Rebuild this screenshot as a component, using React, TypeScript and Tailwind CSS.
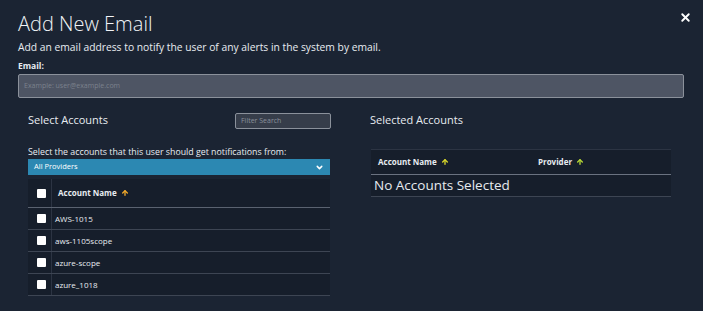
import { X, ChevronDown, ArrowUp } from "lucide-react";

const accounts = ["AWS-1015", "aws-1105scope", "azure-scope", "azure_1018"];

function Box() {
  return <div className="w-[9px] h-[9px] bg-white rounded-[1px]" />;
}

export default function App() {
  return (
    <div
      className="w-[703px] h-[311px] bg-[#1b2433] text-[#e8ecf1] overflow-hidden relative"
      style={{ fontFamily: '"Open Sans", "Noto Sans", sans-serif' }}
    >
      <button className="absolute right-[11px] top-[11px] text-white">
        <X size={13} strokeWidth={3.5} />
      </button>
      <div className="px-[18px] pt-[10px]">
        <h1 className="text-[20px] leading-[28px] font-light text-[#f1f4f7]">Add New Email</h1>
        <p className="text-[10.3px] leading-[14px] mt-[2px]">
          Add an email address to notify the user of any alerts in the system by email.
        </p>
        <label className="block text-[8.5px] font-bold mt-[6px] leading-[12px]">Email:</label>
        <div className="mt-[2px] w-[666px] h-[24px] bg-[#4e5564] border border-[#8b919b] rounded-[2px] flex items-center px-[5px]">
          <span className="text-[7px] text-[#7c828d]">Example: user@example.com</span>
        </div>
      </div>

      <div className="flex mt-[15px]">
        <div className="w-[302px] ml-[28px]">
          <div className="flex items-start justify-between h-[16px]">
            <span className="text-[11px] leading-[13px]">Select Accounts</span>
            <div className="w-[96px] h-[16px] border border-[#8b919b] bg-[#363d4a] rounded-[2px] flex items-center px-[5px] mr-[-1px]">
              <span className="text-[7px] text-[#8a909a]">Filter Search</span>
            </div>
          </div>
          <p className="text-[8.8px] mt-[17px] leading-[12px]">
            Select the accounts that this user should get notifications from:
          </p>
          <div className="h-[16px] bg-[#2c88b2] flex items-center justify-between px-[6px] mt-[1px]">
            <span className="text-[7.5px] text-white">All Providers</span>
            <ChevronDown size={9} strokeWidth={4} className="text-white" />
          </div>
          <div className="mt-[4px] bg-[#161e2b]">
            <div className="flex items-center h-[29px] border-b border-[#5a6270]">
              <div className="w-[23px] flex justify-center pl-[3px]">
                <Box />
              </div>
              <div className="w-px h-full bg-[#2c3443]" />
              <span className="ml-[6px] text-[8px] font-bold">Account Name</span>
              <ArrowUp size={8} strokeWidth={4} className="text-[#f0a82a] ml-[4px]" />
            </div>
            {accounts.map((a) => (
              <div key={a} className="flex items-center h-[22px] border-b border-[#3d4553]">
                <div className="w-[23px] flex justify-center pl-[3px]">
                  <Box />
                </div>
                <div className="w-px h-full bg-[#2c3443]" />
                <span className="ml-[3px] text-[8px]">{a}</span>
              </div>
            ))}
          </div>
        </div>

        <div className="w-[300px] ml-[41px]">
          <div className="h-[16px] flex items-start">
            <span className="text-[11px] leading-[13px] ml-[-1px]">Selected Accounts</span>
          </div>
          <div className="mt-[20px] border-t border-[#2c3443] bg-[#161e2b]">
            <div className="flex items-center h-[25px] border-b border-[#6a7280]">
              <div className="w-[167px] flex items-center pl-[7px]">
                <span className="text-[8px] font-bold">Account Name</span>
                <ArrowUp size={8} strokeWidth={4} className="text-[#d6d62a] ml-[4px]" />
              </div>
              <div className="flex items-center">
                <span className="text-[8px] font-bold">Provider</span>
                <ArrowUp size={8} strokeWidth={4} className="text-[#b5d635] ml-[4px]" />
              </div>
            </div>
            <div className="h-[22px] flex items-center pl-[3px] border-b border-[#3d4553]">
              <span className="text-[13.5px] text-[#e6eaef]">No Accounts Selected</span>
            </div>
          </div>
        </div>
      </div>
    </div>
  );
}
